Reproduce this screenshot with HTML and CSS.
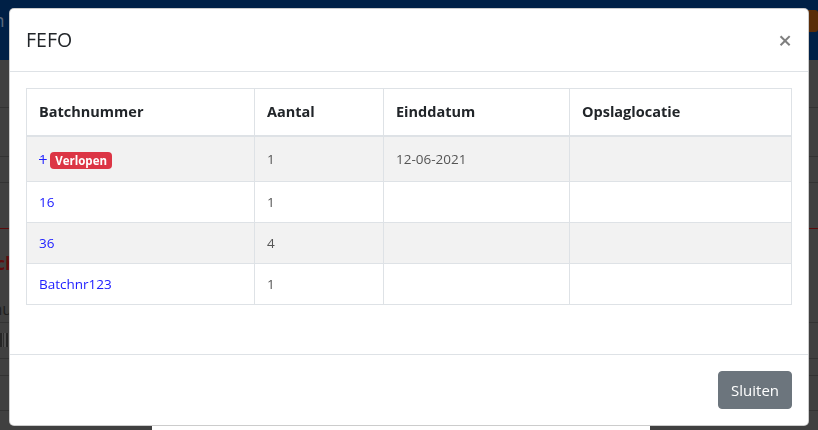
FILE: index.html
```html
<!DOCTYPE html>
<html lang="nl">
<head>
<meta charset="utf-8">
<title>FEFO</title>
<link rel="stylesheet" href="styles.css">
</head>
<body>
<div class="page">
  <header class="navbar">
    <span class="brand">Admin</span>
    <span class="nav-btn"></span>
  </header>
  <div class="row row-a"></div>
  <div class="row row-b"></div>
  <div class="row row-c"></div>
  <div class="row row-d"></div>
  <div class="row row-e">
    <div class="page-title">Batch</div>
    <div class="page-label">Batchnu</div>
  </div>
  <div class="row row-f"><div class="barcode"></div></div>
  <div class="row row-g"></div>
  <div class="row row-h"></div>
  <div class="spacer"></div>
  <div class="dropdown-strip"></div>
</div>

<div class="modal-layer">
  <div class="modal">
    <div class="modal-header">
      <h5 class="modal-title">FEFO</h5>
      <button class="close" type="button">×</button>
    </div>
    <div class="modal-body">
      <table class="fefo-table">
        <colgroup>
          <col class="col-batch">
          <col class="col-aantal">
          <col class="col-eind">
          <col class="col-opslag">
        </colgroup>
        <thead>
          <tr>
            <th>Batchnummer</th>
            <th>Aantal</th>
            <th>Einddatum</th>
            <th>Opslaglocatie</th>
          </tr>
        </thead>
        <tbody>
          <tr class="striped tall">
            <td><a class="batch-link expired" href="#">1</a> <span class="badge">Verlopen</span></td>
            <td>1</td>
            <td>12-06-2021</td>
            <td></td>
          </tr>
          <tr>
            <td><a class="batch-link" href="#">16</a></td>
            <td>1</td>
            <td></td>
            <td></td>
          </tr>
          <tr class="striped">
            <td><a class="batch-link" href="#">36</a></td>
            <td>4</td>
            <td></td>
            <td></td>
          </tr>
          <tr>
            <td><a class="batch-link" href="#">Batchnr123</a></td>
            <td>1</td>
            <td></td>
            <td></td>
          </tr>
        </tbody>
      </table>
    </div>
    <div class="modal-footer">
      <button class="btn" type="button">Sluiten</button>
    </div>
  </div>
</div>
</body>
</html>
```

FILE: styles.css
```css
* {
  box-sizing: border-box;
}

html,
body {
  margin: 0;
  height: 100%;
}

body {
  background: #404040;
  font-family: "Open Sans", "Liberation Sans", sans-serif;
  overflow: hidden;
  color: #212529;
}

/* ---------- dimmed page behind the modal ---------- */
.page {
  width: 100%;
}

.navbar {
  height: 60px;
  background: #002046;
  display: flex;
  justify-content: space-between;
  align-items: flex-start;
  overflow: hidden;
}

.brand {
  margin-left: -50px;
  margin-top: 10px;
  font-size: 18px;
  line-height: 20px;
  color: #5d6b7e;
}

.nav-btn {
  width: 24px;
  height: 22px;
  margin-top: 10px;
  background: #5a2c08;
  border-radius: 3px;
}

.row {
  border-bottom: 1px solid #333333;
}

.row-a { height: 48px; }
.row-b { height: 49px; }
.row-c { height: 26px; }
.row-d { height: 46px; border-bottom-color: #5c0b0b; }

.row-e {
  height: 94px;
  padding-top: 22px;
  overflow: hidden;
}

.page-title {
  margin-left: -35px;
  font-size: 18px;
  line-height: 24px;
  font-weight: 700;
  color: #5e0c0c;
}

.page-label {
  margin-left: -50px;
  margin-top: 22px;
  font-size: 16px;
  line-height: 24px;
  color: #1e1e1e;
}

.row-f {
  height: 36px;
  padding-top: 10px;
}

.barcode {
  width: 120px;
  height: 14px;
  background: repeating-linear-gradient(90deg, #262626 0 2px, #4a4a4a 2px 3px, #2e2e2e 3px 4px, #505050 4px 6px);
}

.row-g { height: 17px; }
.row-h { height: 35px; }

.spacer {
  height: 13px;
}

.dropdown-strip {
  margin-left: 152px;
  width: 498px;
  height: 20px;
  background: #ffffff;
  border-top: 1px solid #c9c9c9;
}

/* ---------- modal ---------- */
.modal-layer {
  position: fixed;
  inset: 0;
  display: flex;
  justify-content: center;
  align-items: flex-start;
}

.modal {
  width: 800px;
  margin-top: 8px;
  background: #ffffff;
  border: 1px solid rgba(0, 0, 0, 0.2);
  border-radius: 5px;
  display: flex;
  flex-direction: column;
}

.modal-header {
  display: flex;
  align-items: flex-start;
  padding: 16px;
  border-bottom: 1px solid #dee2e6;
}

.modal-title {
  margin: 0;
  font-size: 19.5px;
  line-height: 30px;
  font-weight: 400;
  color: #212529;
}

.close {
  margin: -16px -16px -16px auto;
  padding: 19px 16px 13px;
  background: transparent;
  border: 0;
  font-family: "Open Sans", "Liberation Sans", sans-serif;
  font-size: 24px;
  font-weight: 600;
  line-height: 1;
  color: #000000;
  opacity: 0.5;
  cursor: pointer;
}

.modal-body {
  padding: 16px;
}

.fefo-table {
  width: 100%;
  table-layout: fixed;
  border-collapse: separate;
  border-spacing: 0;
  border-top: 1px solid #dee2e6;
  border-left: 1px solid #dee2e6;
  margin-bottom: 33px;
}

.col-batch { width: 228px; }
.col-aantal { width: 129px; }
.col-eind { width: 186px; }
.col-opslag { width: 222px; }

.fefo-table th {
  text-align: left;
  padding: 12px;
  font-size: 14.5px;
  line-height: 22px;
  font-weight: 700;
  color: #212529;
  border-right: 1px solid #dee2e6;
  border-bottom: 2px solid #dee2e6;
  vertical-align: middle;
}

.fefo-table td {
  padding: 10px 12px;
  font-size: 13.5px;
  line-height: 20px;
  color: #555555;
  border-right: 1px solid #dee2e6;
  border-bottom: 1px solid #dee2e6;
  vertical-align: middle;
  white-space: nowrap;
}

.fefo-table tr.tall td {
  padding-top: 12px;
  padding-bottom: 12px;
}

.fefo-table tr.striped td {
  background: #f2f2f2;
}

.batch-link {
  color: #2020ff;
  text-decoration: none;
}

.batch-link.expired {
  text-decoration: line-through;
}

.badge {
  display: inline-block;
  vertical-align: middle;
  padding: 3px 5px;
  font-size: 11.5px;
  line-height: 1;
  font-weight: 700;
  color: #ffffff;
  background: #dc3545;
  border-radius: 4px;
}

.modal-footer {
  display: flex;
  justify-content: flex-end;
  align-items: center;
  padding: 12px;
  border-top: 1px solid #dee2e6;
}

.btn {
  margin: 4px;
  padding: 6px 12px;
  font-family: "Open Sans", "Liberation Sans", sans-serif;
  font-size: 15px;
  line-height: 24px;
  color: #ffffff;
  background: #6c757d;
  border: 1px solid #6c757d;
  border-radius: 4px;
  cursor: pointer;
}
```
